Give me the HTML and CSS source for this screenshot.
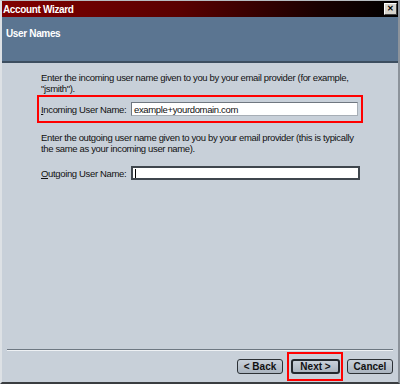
FILE: index.html
```html
<!DOCTYPE html>
<html lang="en">
<head>
    <meta charset="UTF-8">
    <title>Account Wizard</title>
    <link rel="stylesheet" href="styles.css">
</head>
<body>
    <div class="window">
        <div class="titlebar">
            <span class="title">Account Wizard</span>
            <span class="close">&#x2715;</span>
        </div>
        <div class="header">User Names</div>
        <div class="content">
            <p class="desc">Enter the incoming user name given to you by your email provider (for example, "jsmith").</p>
            <div class="field highlight">
                <label class="label"><u>I</u>ncoming User Name:</label>
                <div class="input filled">example+yourdomain.com</div>
            </div>
            <p class="desc">Enter the outgoing user name given to you by your email provider (this is typically the same as your incoming user name).</p>
            <div class="field">
                <label class="label"><u>O</u>utgoing User Name:</label>
                <div class="input empty"><span class="caret"></span></div>
            </div>
        </div>
        <div class="footer">
            <div class="separator"></div>
            <div class="buttons">
                <button class="btn">&lt; Back</button>
                <div class="btn-mark"><button class="btn default">Next &gt;</button></div>
                <button class="btn">Cancel</button>
            </div>
        </div>
    </div>
</body>
</html>
```
FILE: styles.css
```css
body {
    margin: 0;
    font-family: 'Liberation Sans', Arial, sans-serif;
    font-size: 9.5px;
    letter-spacing: -0.35px;
    color: #111;
}
.window {
    width: 400px;
    height: 384px;
    box-sizing: border-box;
    border-top: 1px solid #b8bcc0;
    border-left: 2px solid #dde1e5;
    border-right: 2px solid #8c939b;
    border-bottom: 2px solid #3a3d40;
    background: #c8d0d9;
    display: flex;
    flex-direction: column;
}
.titlebar {
    height: 16px;
    background: linear-gradient(to right, #800000, #5a0000 45%, #1a0000 80%, #000000);
    display: flex;
    align-items: center;
    justify-content: space-between;
    padding: 0 1px 0 1px;
}
.title {
    color: white;
    font-weight: bold;
    font-size: 10px;
}
.close {
    width: 11px;
    height: 10px;
    background: #d6d3cc;
    border: 1px solid;
    border-color: #ffffff #404040 #404040 #ffffff;
    font-size: 8px;
    font-weight: bold;
    line-height: 10px;
    text-align: center;
    letter-spacing: 0;
    color: #000;
}
.header {
    height: 46px;
    box-sizing: border-box;
    background: #5b7591;
    border-bottom: 2px solid #3d4e60;
    color: white;
    font-weight: bold;
    font-size: 10px;
    padding: 11px 0 0 4px;
}
.content {
    flex: 1;
    padding: 9px 35px 0 35px;
}
.desc {
    margin: 0 0 1px 4px;
    line-height: 11px;
}
.field {
    display: flex;
    align-items: center;
    padding: 0 3px 0 4px;
    height: 14px;
    margin-top: 12px;
}
.field.highlight {
    border: 2px solid #ff0000;
    height: 24px;
    padding: 0 3px 0 2px;
    margin-top: 0;
    margin-bottom: 9px;
}
.label {
    width: 90px;
}
.input {
    flex: 1;
    height: 14px;
    box-sizing: border-box;
    background: white;
    display: flex;
    align-items: center;
    padding-left: 2px;
}
.input.filled {
    border: 1px solid;
    border-color: #6f7780 #a7aeb6 #a7aeb6 #6f7780;
}
.input.empty {
    border: 2px solid #3f464d;
    height: 14px;
}
.caret {
    width: 1px;
    height: 9px;
    background: #000;
}
.footer {
    padding: 0 5px 1px 5px;
}
.separator {
    height: 1px;
    background: #6e7882;
    border-bottom: 1px solid #eef1f4;
}
.buttons {
    display: flex;
    justify-content: flex-end;
    align-items: center;
    gap: 4px;
    margin-top: 1px;
}
.btn-mark {
    border: 2px solid #ff0000;
    padding: 5px 1px 2px 2px;
    height: 18px;
}
.btn {
    height: 15px;
    box-sizing: border-box;
    font-family: 'Liberation Sans', Arial, sans-serif;
    font-size: 10px;
    font-weight: bold;
    letter-spacing: 0;
    color: #111;
    background: linear-gradient(#c9d1da, #aab4bf);
    border: 1px solid #2c3136;
    border-radius: 3px;
    padding: 0;
    width: 46px;
}
.btn.default {
    width: 49px;
    border: 2px solid #23282d;
}
```
